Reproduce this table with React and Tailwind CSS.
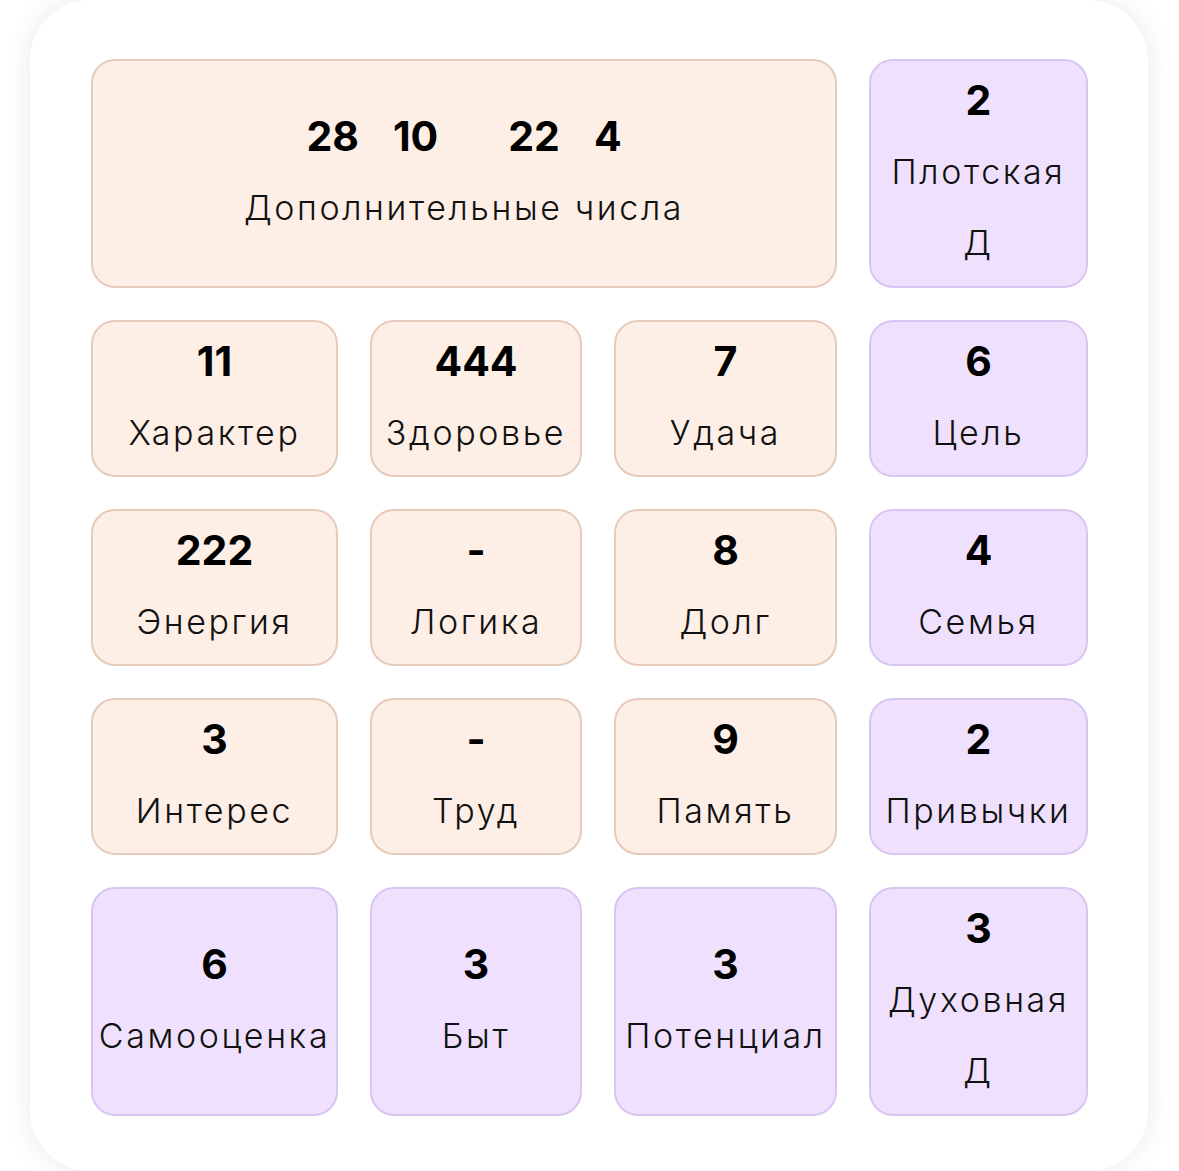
import React from "react";

const peach = "bg-[#fdeee6] border-[#e6cbbb]";
const lilac = "bg-[#efe1fe] border-[#d8c5f1]";

const Cell = ({ value, label, tone, className = "" }) => (
  <div
    className={`flex flex-col items-center justify-center pb-[4px] rounded-[24px] border-[2.5px] text-center ${
      tone === "lilac" ? lilac : peach
    } ${className}`}
  >
    <div className="text-[41px] font-bold leading-[71px] text-black">{value}</div>
    {label.map((l, i) => (
      <div key={i} className="text-[34px] font-light tracking-[2.6px] leading-[71px] text-[#111] whitespace-nowrap">
        {l}
      </div>
    ))}
  </div>
);

const rows = [
  [
    { value: "11", label: ["Характер"] },
    { value: "444", label: ["Здоровье"] },
    { value: "7", label: ["Удача"] },
    { value: "6", label: ["Цель"], tone: "lilac" },
  ],
  [
    { value: "222", label: ["Энергия"] },
    { value: "-", label: ["Логика"] },
    { value: "8", label: ["Долг"] },
    { value: "4", label: ["Семья"], tone: "lilac" },
  ],
  [
    { value: "3", label: ["Интерес"] },
    { value: "-", label: ["Труд"] },
    { value: "9", label: ["Память"] },
    { value: "2", label: ["Привычки"], tone: "lilac" },
  ],
  [
    { value: "6", label: ["Самооценка"], tone: "lilac" },
    { value: "3", label: ["Быт"], tone: "lilac" },
    { value: "3", label: ["Потенциал"], tone: "lilac" },
    { value: "3", label: ["Духовная", "Д"], tone: "lilac" },
  ],
];

export default function App() {
  return (
    <div
      className="min-h-screen bg-white px-[30px]"
      style={{ fontFamily: "Inter, 'Noto Sans', sans-serif" }}
    >
      <div className="w-[1118px] h-[1171px] rounded-[60px] bg-white shadow-[0_0_28px_rgba(0,0,0,0.09)] pl-[61px] pr-[60px] pt-[59px]">
        <div className="grid grid-cols-[247px_212px_223px_219px] grid-rows-[229px_157px_157px_157px_229px] gap-[32px]">
          <div className="col-span-3 flex flex-col items-center justify-center pb-[4px] rounded-[24px] border-[2.5px] bg-[#fdeee6] border-[#e6cbbb]">
            <div className="flex items-center gap-[34px] text-[41px] font-bold leading-[71px] text-black">
              <span>28</span>
              <span>10</span>
              <span className="ml-[36px]">22</span>
              <span>4</span>
            </div>
            <div className="text-[34px] font-light tracking-[2.6px] leading-[71px] text-[#111]">
              Дополнительные числа
            </div>
          </div>
          <Cell value="2" label={["Плотская", "Д"]} tone="lilac" />
          {rows.map((row, ri) =>
            row.map((c, ci) => <Cell key={`${ri}-${ci}`} {...c} />)
          )}
        </div>
      </div>
    </div>
  );
}
